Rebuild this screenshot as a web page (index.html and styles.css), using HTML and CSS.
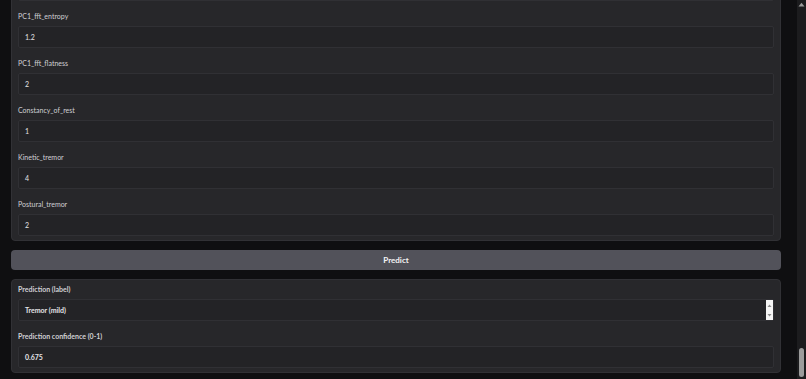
FILE: index.html
```html
<!DOCTYPE html>
<html lang="en">
<head>
<meta charset="utf-8">
<title>Tremor prediction</title>
<link rel="stylesheet" href="styles.css">
</head>
<body>
<main class="page">
  <section class="panel panel-inputs">
    <div class="field field-hidden">
      <div class="label"></div>
      <div class="input"></div>
    </div>
    <div class="field">
      <label class="label">PC1_fft_entropy</label>
      <div class="input">1.2</div>
    </div>
    <div class="field">
      <label class="label">PC1_fft_flatness</label>
      <div class="input">2</div>
    </div>
    <div class="field">
      <label class="label">Constancy_of_rest</label>
      <div class="input">1</div>
    </div>
    <div class="field">
      <label class="label">Kinetic_tremor</label>
      <div class="input">4</div>
    </div>
    <div class="field">
      <label class="label">Postural_tremor</label>
      <div class="input">2</div>
    </div>
  </section>

  <button class="predict">Predict</button>

  <section class="panel panel-outputs">
    <div class="field">
      <label class="label label-strong">Prediction (label)</label>
      <div class="input input-strong">
        Tremor (mild)
        <span class="spinner">
          <svg width="7" height="21" viewBox="0 0 7 21">
            <path d="M1.5 7 L3.5 4.6 L5.5 7 Z" fill="#8a8a8a"/>
            <path d="M1.5 14 L3.5 16.4 L5.5 14 Z" fill="#8a8a8a"/>
          </svg>
        </span>
      </div>
    </div>
    <div class="field">
      <label class="label label-strong">Prediction confidence (0-1)</label>
      <div class="input input-strong">0.675</div>
    </div>
  </section>
</main>
<div class="scrollbar">
  <svg class="scroll-arrow" width="7" height="5" viewBox="0 0 7 5"><path d="M0.5 4.5 L3.5 0.8 L6.5 4.5 Z" fill="#9a9a9a"/></svg>
  <div class="scroll-thumb"></div>
</div>
</body>
</html>
```

FILE: styles.css
```css
html, body {
  margin: 0;
  padding: 0;
  height: 100%;
  overflow: hidden;
  background: #0f0f11;
}

body {
  font-family: Lato, "Liberation Sans", sans-serif;
  color: #e4e4e7;
}

.page {
  display: flex;
  flex-direction: column;
  padding: 0 25px 0 11px;
}

.panel {
  background: #27272a;
  border: 1px solid #313135;
  border-radius: 4px;
  padding: 4px 6px;
  display: flex;
  flex-direction: column;
  gap: 10px;
}

.panel-inputs {
  margin-top: -41px;
}

.field {
  display: flex;
  flex-direction: column;
}

.label {
  display: block;
  font-size: 7px;
  line-height: 11px;
  height: 11px;
  margin-bottom: 4px;
  color: #d0d0d4;
}

.label-strong {
  font-weight: 700;
}

.input {
  position: relative;
  box-sizing: border-box;
  height: 22px;
  background: #232326;
  border: 1px solid #303034;
  border-radius: 2px;
  padding: 0 6px;
  font-size: 7px;
  line-height: 20px;
  color: #e4e4e7;
}

.input-strong {
  font-weight: 700;
}

.spinner {
  position: absolute;
  right: 0;
  top: 0;
  width: 7px;
  height: 20px;
  background: #f4f4f4;
  display: flex;
}

.spinner svg {
  display: block;
}

.predict {
  margin: 9px 0;
  height: 20px;
  border: none;
  border-radius: 4px;
  background: #52525a;
  color: #f4f4f5;
  font-family: Lato, "Liberation Sans", sans-serif;
  font-weight: 700;
  font-size: 8px;
  padding: 0;
}

.scrollbar {
  position: fixed;
  top: 0;
  right: 0;
  width: 9px;
  height: 100%;
  background: #1c1c1e;
}

.scroll-arrow {
  position: absolute;
  top: 2px;
  left: 1px;
}

.scroll-thumb {
  position: absolute;
  left: 2px;
  width: 5px;
  top: 348px;
  height: 29px;
  border-radius: 3px;
  background: #9c9c9c;
}
```
